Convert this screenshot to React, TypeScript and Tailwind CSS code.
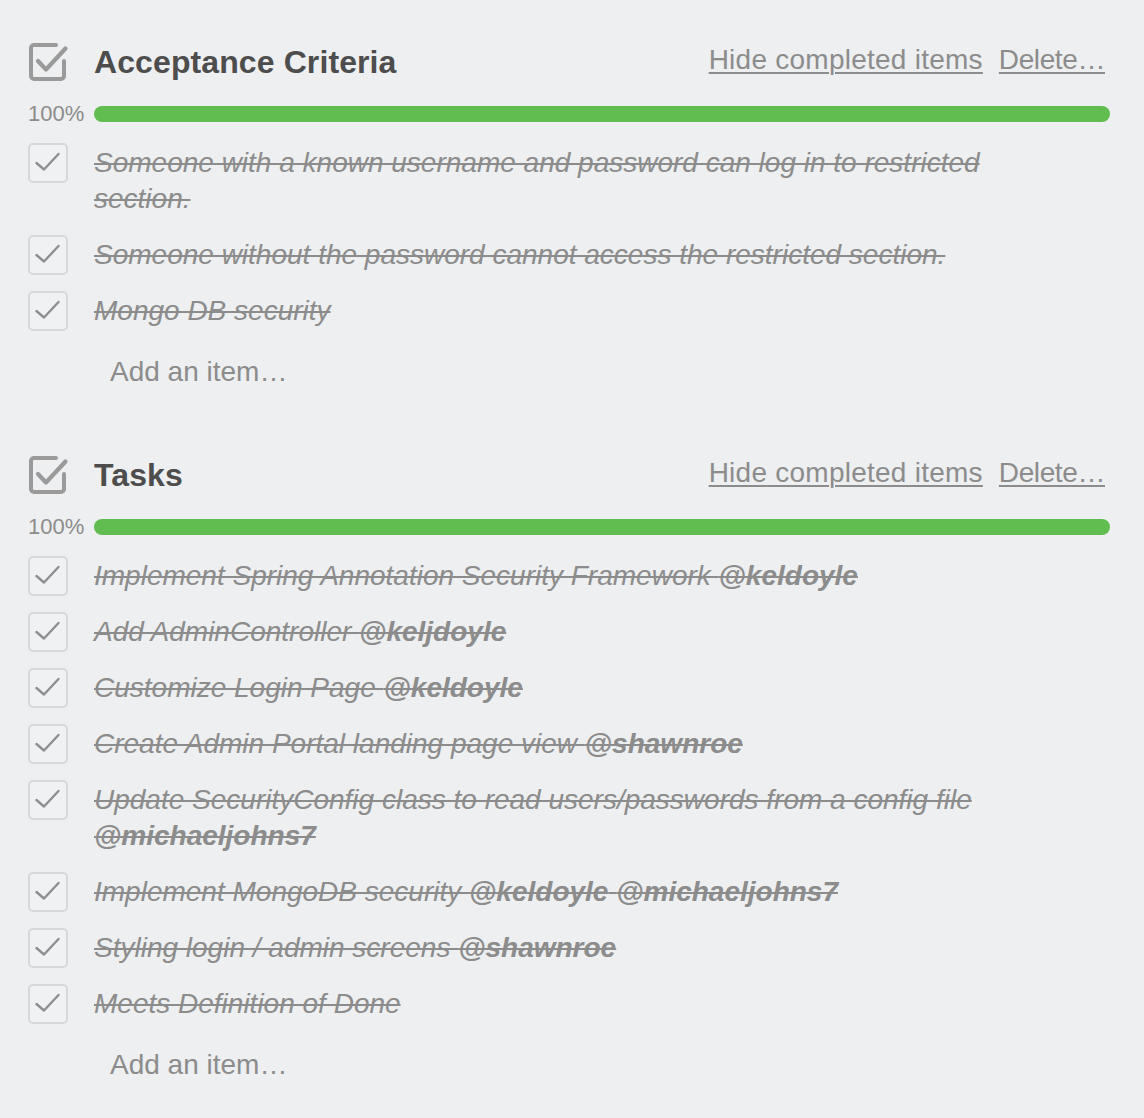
import React from 'react';

type Part = { text: string; mention?: boolean };
type Item = { parts: Part[] };

const acceptance: Item[] = [
  { parts: [{ text: 'Someone with a known username and password can log in to restricted section.' }] },
  { parts: [{ text: 'Someone without the password cannot access the restricted section.' }] },
  { parts: [{ text: 'Mongo DB security' }] },
];

const tasks: Item[] = [
  { parts: [{ text: 'Implement Spring Annotation Security Framework ' }, { text: '@keldoyle', mention: true }] },
  { parts: [{ text: 'Add AdminController ' }, { text: '@keljdoyle', mention: true }] },
  { parts: [{ text: 'Customize Login Page ' }, { text: '@keldoyle', mention: true }] },
  { parts: [{ text: 'Create Admin Portal landing page view ' }, { text: '@shawnroe', mention: true }] },
  {
    parts: [
      { text: 'Update SecurityConfig class to read users/passwords from a config file ' },
      { text: '@michaeljohns7', mention: true },
    ],
  },
  {
    parts: [
      { text: 'Implement MongoDB security ' },
      { text: '@keldoyle', mention: true },
      { text: ' ' },
      { text: '@michaeljohns7', mention: true },
    ],
  },
  { parts: [{ text: 'Styling login / admin screens ' }, { text: '@shawnroe', mention: true }] },
  { parts: [{ text: 'Meets Definition of Done' }] },
];

function ChecklistIcon() {
  return (
    <svg width="42" height="42" viewBox="0 0 42 42" fill="none" className="-ml-[1px]">
      <path
        d="M37 20 V35 a3 3 0 0 1 -3 3 H7 a3 3 0 0 1 -3 -3 V7 a3 3 0 0 1 3 -3 H29"
        stroke="#9a9a9a"
        strokeWidth="4"
        strokeLinecap="round"
        strokeLinejoin="round"
      />
      <path d="M11 20 L19 28.5 L38.5 7.5" stroke="#9a9a9a" strokeWidth="4.2" strokeLinecap="round" strokeLinejoin="round" />
    </svg>
  );
}

function CheckBox() {
  return (
    <div className="w-[40px] h-[40px] shrink-0 rounded-[5px] border-2 border-[#d6d8da] bg-[#eff1f2] flex items-center justify-center">
      <svg width="40" height="40" viewBox="0 0 40 40" fill="none" className="-m-[2px]">
        <path d="M8.5 20 L16 26.5 L30.5 11" stroke="#8f8f8f" strokeWidth="2.4" strokeLinecap="round" strokeLinejoin="round" />
      </svg>
    </div>
  );
}

function Checklist({ title, items }: { title: string; items: Item[] }) {
  return (
    <section>
      <div className="flex items-center h-[48px]">
        <div className="w-[66px] shrink-0 flex items-center">
          <ChecklistIcon />
        </div>
        <h3 className="flex-1 text-[32px] font-bold text-[#4d4d4d] leading-[40px] tracking-[0.1px]">{title}</h3>
        <div className="flex gap-[16px] mr-[5px] text-[28px] leading-[32px] text-[#8c8c8c] -mt-[4px]">
          <a className="underline decoration-[1.5px] underline-offset-[3px] tracking-[0.25px]">Hide completed items</a>
          <a className="underline decoration-[1.5px] underline-offset-[3px] tracking-[-0.4px]">Delete…</a>
        </div>
      </div>

      <div className="flex items-center h-[28px] mt-[14px]">
        <span className="w-[66px] shrink-0 text-[22px] text-[#8c8c8c] leading-[28px]">100%</span>
        <div className="flex-1 h-[16px] rounded-full bg-[#61bd4f]" />
      </div>

      <ul className="mt-[7px]">
        {items.map((item, i) => (
          <li key={i} className="flex py-[8px]">
            <div className="w-[66px] shrink-0">
              <CheckBox />
            </div>
            <p className="flex-1 pr-[70px] pt-[2px] pb-[2px] text-[28px] leading-[36px] italic text-[#8c8c8c] line-through decoration-[1.5px]">
              {item.parts.map((p, j) =>
                p.mention ? (
                  <strong key={j} className="font-bold">
                    {p.text}
                  </strong>
                ) : (
                  <span key={j}>{p.text}</span>
                )
              )}
            </p>
          </li>
        ))}
      </ul>

      <div className="h-[66px] flex items-center pl-[82px] text-[28px] text-[#8c8c8c]">Add an item…</div>
    </section>
  );
}

export default function App() {
  return (
    <div
      className="min-h-screen bg-[#edeff0] pl-[28px] pr-[34px] pt-[38px]"
      style={{ fontFamily: '"Liberation Sans", Arial, sans-serif' }}
    >
      <Checklist title="Acceptance Criteria" items={acceptance} />
      <div className="h-[46px]" />
      <Checklist title="Tasks" items={tasks} />
    </div>
  );
}
